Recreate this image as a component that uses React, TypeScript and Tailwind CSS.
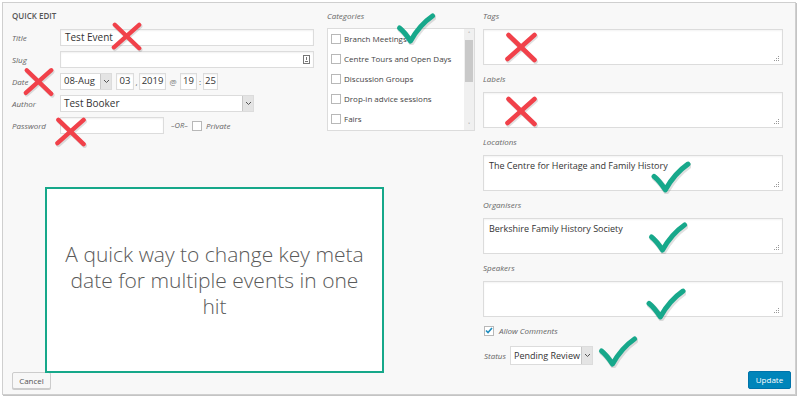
import React from 'react';

const font = { fontFamily: '"Open Sans", "Noto Sans", Arial, sans-serif' };

function Cross({ x, y, w, h }: { x: number; y: number; w: number; h: number }) {
  return (
    <svg
      className="absolute pointer-events-none"
      style={{ left: x, top: y, width: w, height: h }}
      viewBox="0 0 36 32"
    >
      <g stroke="#000" strokeOpacity="0.12" strokeWidth="5" strokeLinecap="round" transform="translate(1 1.5)">
        <path d="M5 3 L31 28" />
        <path d="M31 3 L4 27" />
      </g>
      <g stroke="#f1414a" strokeWidth="4.6" strokeLinecap="round">
        <path d="M5 3 L31 28" />
        <path d="M31 3 L4 27" />
      </g>
    </svg>
  );
}

function Tick({ x, y, w, h }: { x: number; y: number; w: number; h: number }) {
  return (
    <svg
      className="absolute pointer-events-none"
      style={{ left: x, top: y, width: w, height: h }}
      viewBox="0 0 40 33"
    >
      <path
        d="M4 16 Q9 20 15 29 Q24 13 37 4"
        fill="none"
        stroke="#000"
        strokeOpacity="0.12"
        strokeWidth="6"
        strokeLinecap="round"
        strokeLinejoin="round"
        transform="translate(1 1.5)"
      />
      <path
        d="M4 16 Q9 20 15 29 Q24 13 37 4"
        fill="none"
        stroke="#17a88b"
        strokeWidth="5"
        strokeLinecap="round"
        strokeLinejoin="round"
      />
    </svg>
  );
}

function Chevron() {
  return (
    <svg width="7" height="5" viewBox="0 0 7 5">
      <path d="M1 1 L3.5 3.5 L6 1" fill="none" stroke="#555" strokeWidth="1" />
    </svg>
  );
}

function Grip() {
  return (
    <svg className="absolute right-[2px] bottom-[2px]" width="6" height="6" viewBox="0 0 6 6">
      <rect x="4" y="0" width="1" height="1" fill="#999" />
      <rect x="2" y="2" width="1" height="1" fill="#999" />
      <rect x="4" y="2" width="1" height="1" fill="#999" />
      <rect x="0" y="4" width="1" height="1" fill="#999" />
      <rect x="2" y="4" width="1" height="1" fill="#999" />
      <rect x="4" y="4" width="1" height="1" fill="#999" />
    </svg>
  );
}

const inputCls =
  'h-[17px] bg-white border border-[#dcdcdc] shadow-[inset_0_1px_2px_rgba(0,0,0,0.06)] flex items-center text-[9.5px] text-[#333]';

function Label({ children }: { children: React.ReactNode }) {
  return <div className="w-[48px] shrink-0 text-[8px] italic text-[#666]">{children}</div>;
}

function Select({ value, w, h = 17, text = 'text-[9.5px]' }: { value: string; w: number; h?: number; text?: string }) {
  return (
    <div
      className={`flex bg-white border border-[#dcdcdc] ${text} text-[#333]`}
      style={{ width: w, height: h }}
    >
      <div className="flex-1 flex items-center pl-[3px] whitespace-nowrap">{value}</div>
      <div className="w-[11px] bg-[#e4e4e4] border-l border-[#c8c8c8] flex items-center justify-center">
        <Chevron />
      </div>
    </div>
  );
}

function Box() {
  return <div className="w-[10px] h-[10px] bg-white border border-[#b8b8b8] shrink-0" />;
}

function Area({ label, value }: { label: string; value?: string }) {
  return (
    <div className="flex flex-col">
      <div className="h-[14px] leading-[14px] text-[8px] italic text-[#666]">{label}</div>
      <div className="mt-[6px] relative h-[36px] bg-white border border-[#dcdcdc] shadow-[inset_0_1px_2px_rgba(0,0,0,0.05)] px-[5px] pt-[3px] text-[9px] text-[#333]">
        {value}
        <Grip />
      </div>
    </div>
  );
}

const categories = [
  'Branch Meetings',
  'Centre Tours and Open Days',
  'Discussion Groups',
  'Drop-in advice sessions',
  'Fairs',
];

export default function App() {
  return (
    <div className="w-[800px] h-[398px] bg-white relative overflow-hidden pl-[2px] pt-[2px]" style={font}>
      <div className="w-[794px] h-[393px] bg-[#f8f8f8] border border-[#cfcfcf] shadow-[1px_1px_0_#c4c4c4] flex flex-col">
        <div className="flex pl-[9px] pt-[6px]">
          {/* left column */}
          <div className="w-[302px] flex flex-col">
            <div className="h-[14px] leading-[14px] text-[8px] font-semibold text-[#555] uppercase">Quick Edit</div>
            <div className="mt-[6px] flex flex-col gap-[5px]">
              <div className="flex items-center">
                <Label>Title</Label>
                <div className={`${inputCls} w-[254px] pl-[4px] text-[10px]`}>Test Event</div>
              </div>
              <div className="flex items-center">
                <Label>Slug</Label>
                <div className={`${inputCls} w-[254px] justify-end pr-[3px]`}>
                  <svg width="7" height="9" viewBox="0 0 7 9">
                    <rect x="0.5" y="0.5" width="6" height="8" fill="none" stroke="#777" />
                    <rect x="3" y="2" width="1" height="3" fill="#777" />
                    <rect x="2" y="6" width="3" height="1" fill="#777" />
                  </svg>
                </div>
              </div>
              <div className="flex items-center">
                <Label>Date</Label>
                <Select value="08-Aug" w={52} />
                <div className={`${inputCls} w-[18px] ml-[4px] justify-center text-[8.5px]`}>03</div>
                <div className="w-[5px] text-[8px] text-[#555] text-center">,</div>
                <div className={`${inputCls} w-[27px] justify-center text-[8.5px]`}>2019</div>
                <div className="w-[14px] text-[8px] text-[#777] text-center">@</div>
                <div className={`${inputCls} w-[17px] justify-center text-[8.5px]`}>19</div>
                <div className="w-[6px] text-[8px] text-[#555] text-center">:</div>
                <div className={`${inputCls} w-[15px] justify-center text-[8.5px]`}>25</div>
              </div>
              <div className="flex items-center">
                <Label>Author</Label>
                <Select value="Test Booker" w={194} text="text-[10px]" />
              </div>
              <div className="flex items-center">
                <Label>Password</Label>
                <div className={`${inputCls} w-[104px]`} />
                <div className="ml-[7px] text-[7.5px] italic text-[#666]">–OR–</div>
                <div className="ml-[4px]">
                  <Box />
                </div>
                <div className="ml-[4px] text-[8px] italic text-[#666]">Private</div>
              </div>
            </div>
          </div>

          {/* middle column */}
          <div className="w-[148px] ml-[13px] flex flex-col">
            <div className="h-[14px] leading-[14px] text-[8px] italic text-[#666]">Categories</div>
            <div className="mt-[5px] h-[103px] bg-white border border-[#dcdcdc] flex">
              <div className="flex-1 flex flex-col">
                {categories.map(c => (
                  <div key={c} className="h-[20px] flex items-center pl-[3px] gap-[3px] text-[8px] text-[#444] whitespace-nowrap">
                    <Box />
                    <span>{c}</span>
                  </div>
                ))}
              </div>
              <div className="w-[10px] bg-[#f0f0f0] flex flex-col items-center">
                <div className="h-[10px] flex items-center text-[6px] text-[#555] leading-none">˄</div>
                <div className="w-[8px] h-[42px] bg-[#c9c9c9] mt-[1px]" />
                <div className="flex-1" />
                <div className="h-[10px] flex items-center text-[6px] text-[#555] leading-none">˅</div>
              </div>
            </div>
          </div>

          {/* right column */}
          <div className="w-[300px] ml-[8px] flex flex-col gap-[7px]">
            <Area label="Tags" />
            <Area label="Labels" />
            <Area label="Locations" value="The Centre for Heritage and Family History" />
            <Area label="Organisers" value="Berkshire Family History Society" />
            <Area label="Speakers" />
            <div className="flex items-center mt-[1px] ml-[1px] h-[11px]">
              <div className="w-[10px] h-[10px] bg-white border border-[#b8b8b8] flex items-center justify-center">
                <svg width="8" height="7" viewBox="0 0 8 7">
                  <path d="M1 3.5 L3 5.5 L7 1" fill="none" stroke="#1e8cbe" strokeWidth="1.6" />
                </svg>
              </div>
              <span className="ml-[5px] text-[8px] italic text-[#666]">Allow Comments</span>
            </div>
            <div className="flex items-center ml-[1px] mt-[3px]">
              <div className="w-[26px] text-[8px] italic text-[#666]">Status</div>
              <Select value="Pending Review" w={83} h={19} text="text-[9px]" />
            </div>
          </div>
        </div>

        <div className="mt-auto flex items-end justify-between pl-[9px] pr-[4px] pb-[5px]">
          <div className="h-[17px] w-[39px] bg-[#f7f7f7] border border-[#cccccc] rounded-[2px] shadow-[0_1px_0_#ccc] flex items-center justify-center text-[8px] text-[#555]">
            Cancel
          </div>
          <div className="h-[18px] w-[43px] bg-[#0085ba] border border-[#0073aa] rounded-[2px] flex items-center justify-center text-[8px] text-white">
            Update
          </div>
        </div>
      </div>

      {/* annotation callout */}
      <div className="absolute left-[45px] top-[187px] w-[339px] h-[186px] bg-white border-[2px] border-[#16a88a] flex items-center justify-center">
        <p className="text-center text-[21px] leading-[26px] font-light text-[#5a5a5a]" style={{ fontFamily: '"Open Sans", Lato, sans-serif' }}>
          A quick way to change key meta
          <br />
          date for multiple events in one
          <br />
          hit
        </p>
      </div>

      {/* marks */}
      <Cross x={110} y={22} w={34} h={30} />
      <Cross x={22} y={67} w={34} h={31} />
      <Cross x={53} y={117} w={36} h={31} />
      <Cross x={503} y={32} w={37} h={32} />
      <Cross x={503} y={96} w={37} h={32} />
      <Tick x={395} y={12} w={41} h={33} />
      <Tick x={650} y={160} w={41} h={34} />
      <Tick x={647} y={221} w={41} h={33} />
      <Tick x={645} y={287} w={41} h={34} />
      <Tick x={597} y={335} w={41} h={33} />
    </div>
  );
}
